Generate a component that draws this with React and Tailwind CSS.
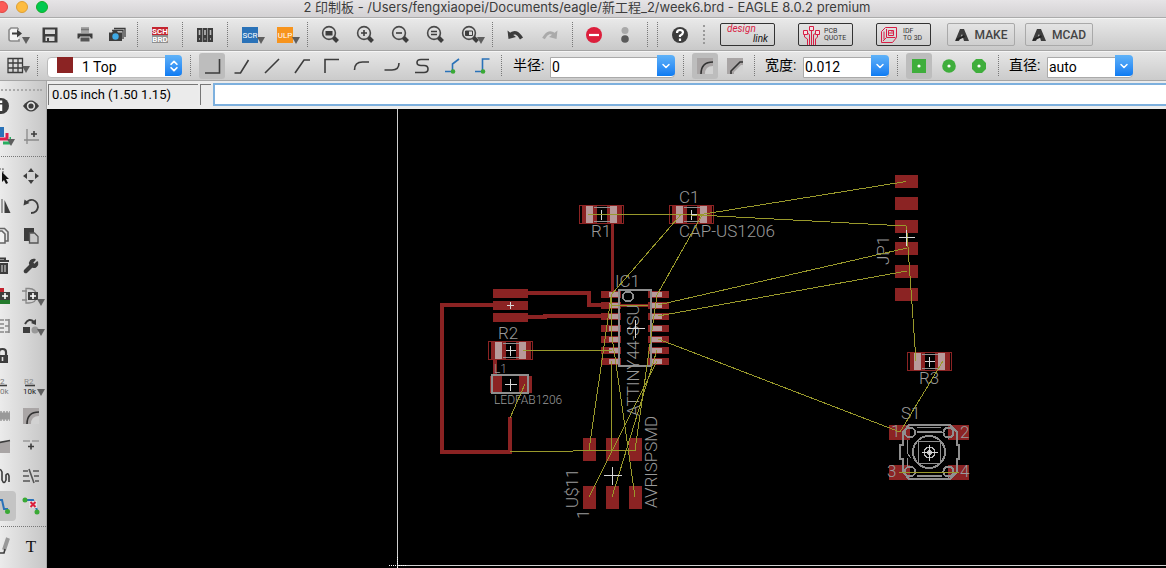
import React, { useState } from "react";
import { ChevronDown, ChevronsUpDown, Wrench } from "lucide-react";

const INK = "#3d3d3d";

// Shared 20x20 icon frame
const Icon = ({ children }) => (
  <svg width="20" height="20" viewBox="0 0 20 20" fill="none" stroke={INK} strokeWidth="1.6" className="shrink-0">
    {children}
  </svg>
);

const Magnifier = ({ children }) => (
  <Icon>
    <circle cx="9" cy="8" r="6.4" stroke="#4a4a4a" />
    <path d="M13.5 12.5l4 4" strokeWidth="4" />
    {children}
  </Icon>
);

const icons = {
  export: (
    <Icon>
      <path d="M12 3H5L3 5v9q0 2 2 2h8v-2M12 3v2" stroke="#8a8a8a" fill="#f4f4f4" />
      <path d="M6 8.500h6" strokeWidth="2" />
      <path d="M11 4.500l5 4-5 4z" fill={INK} stroke="none" />
    </Icon>
  ),
  save: (
    <Icon>
      <path d="M2.500 2.500h15v15h-15z" fill={INK} stroke="none" />
      <path d="M5 4.500h10v4.500H5zM5.500 11.500h9V16h-9z" fill="#d8d8d8" stroke="none" />
      <path d="M7 13h2v3H7z" fill={INK} stroke="none" />
    </Icon>
  ),
  print: (
    <Icon>
      <path d="M6 2h8v6H6z" fill="#a5a5a5" stroke="none" />
      <path d="M6 4.500h8" stroke="#777" />
      <path d="M2.500 8.500h15v5h-15z" fill={INK} stroke="none" />
      <path d="M5 12h10v5H5z" fill="#555" stroke="#d6d6d6" strokeWidth="1" />
    </Icon>
  ),
  camera: (
    <Icon>
      <path d="M7 3.500h11V12M5 5.500h11V14" strokeWidth="1.300" />
      <path d="M2 7.500h3L6 6h4l1 1.500h4V16H2z" fill={INK} stroke="none" />
      <circle cx="8.500" cy="11.500" r="3.200" fill="#3fa9e5" stroke="none" />
    </Icon>
  ),
  schBrd: (
    <Icon>
      <path d="M2 2h16v8H2z" fill="#c4242f" stroke="none" />
      <path d="M2 10h16v8H2z" fill="#8f8f8f" stroke="none" />
      <g fill="#fff" stroke="none" fontFamily="Roboto, sans-serif" fontSize="8" fontWeight="700" textAnchor="middle">
        <text x="10" y="9">SCH</text>
        <text x="10" y="17">BRD</text>
      </g>
    </Icon>
  ),
  library: (
    <Icon>
      <path d="M2 3h5v14H2zM7.500 3h5v14h-5zM13 3h5v14h-5z" fill={INK} stroke="none" />
      <path d="M4.500 5v5M10 5v5M15.500 5v5M4 14h1M9.500 14h1M15 14h1" stroke="#bdbdbd" />
    </Icon>
  ),
  scr: (
    <Icon>
      <path d="M2 2h16v16H2z" fill="#2a72b8" stroke="none" />
      <text x="10" y="13" fill="#fff" stroke="none" fontSize="8" fontFamily="Roboto, sans-serif" textAnchor="middle">SCR</text>
    </Icon>
  ),
  ulp: (
    <Icon>
      <path d="M2 2h16v16H2z" fill="#f7941d" stroke="none" />
      <text x="10" y="13" fill="#fff" stroke="none" fontSize="8" fontFamily="Roboto, sans-serif" textAnchor="middle">ULP</text>
    </Icon>
  ),
  zoomFit: <Magnifier><path d="M5.500 6h7v4.500h-7z" fill={INK} stroke="none" /></Magnifier>,
  zoomIn: <Magnifier><path d="M6 8h6M9 5v6" /></Magnifier>,
  zoomOut: <Magnifier><path d="M6 8h6" /></Magnifier>,
  redraw: <Magnifier><path d="M6 6.500h6M6 9.500h6" /></Magnifier>,
  zoomSelect: (
    <Magnifier>
      <path d="M5.500 6h7v4.500h-7z" strokeWidth="1" />
      <path d="M5.500 6h3.500v4.500H5.500z" fill={INK} stroke="none" />
    </Magnifier>
  ),
  undo: (
    <Icon>
      <path d="M5 10q6-6 11.500 3.500" strokeWidth="3.500" />
      <path d="M2.500 5.500l1 8.500 7.500-2z" fill={INK} stroke="none" />
    </Icon>
  ),
  redo: (
    <Icon>
      <path d="M15 10q-6-6-11.500 3.500" strokeWidth="3" stroke="#aaa" />
      <path d="M17.500 5.500l-1 8.500-7.500-2z" fill="#aaa" stroke="none" />
    </Icon>
  ),
  stop: (
    <Icon>
      <circle cx="9" cy="10" r="8" fill="#dc1f3c" stroke="none" />
      <path d="M4 10h10" stroke="#fff" strokeWidth="2.200" />
    </Icon>
  ),
  go: (
    <Icon>
      <circle cx="8" cy="5.500" r="3.500" fill="#a9a9a9" stroke="none" />
      <circle cx="8" cy="14" r="3.800" fill="#5a5a5a" stroke="none" />
    </Icon>
  ),
  help: (
    <Icon>
      <circle cx="10" cy="10" r="8" fill={INK} stroke="none" />
      <path d="M7 8q0-3 3-3t3 2.600q0 1.400-3 3v1.400M10 13.500V16" stroke="#fff" strokeWidth="2.200" />
    </Icon>
  ),
  grid: (
    <Icon>
      <path d="M2 2.500h14.500v14H2zM7 2.500v14M12 2.500v14M2 7h14.500M2 12h14.500" strokeWidth="1.300" />
    </Icon>
  ),
  layers: (
    <Icon>
      <path d="M0 1h13v10H0z" fill="#2a72b8" stroke="none" />
      <path d="M16 7v6H9" stroke="#dc1f4c" strokeWidth="3" />
      <path d="M20 11v6h-8" stroke="#27ae60" strokeWidth="3" />
    </Icon>
  ),
  mark: <Icon><path d="M6 3v15M3 14h15" stroke="#8a8a8a" strokeWidth="1.300" /><path d="M10 8h6M13 5v6" /></Icon>,
  info: (
    <Icon>
      <circle cx="10" cy="10" r="8" fill={INK} stroke="none" />
      <path d="M10 8.500V15M10 4.500v2.500" stroke="#fff" strokeWidth="2.500" />
    </Icon>
  ),
  eye: (
    <Icon>
      <path d="M2 10q8-11 16 0-8 11-16 0z" fill={INK} stroke="none" />
      <circle cx="10" cy="10" r="3.400" fill={INK} stroke="#e0e0e0" />
    </Icon>
  ),
  pick: (
    <Icon>
      <path d="M2 3h10v7" stroke="#888" strokeDasharray="2 1" />
      <path d="M11 6l7 7h-3l2 4-2 1-2-4-2 2z" fill="#111" stroke="none" />
    </Icon>
  ),
  move: (
    <Icon>
      <path d="M10 2l3 4H7zM10 18l3-4H7zM2 10l4-3v6zM18 10l-4-3v6z" fill={INK} stroke="none" />
    </Icon>
  ),
  mirror: <Icon><path d="M11 3v14" stroke="#888" /><path d="M13.500 4l6 13h-6z" fill={INK} stroke="none" /></Icon>,
  rotate: (
    <Icon>
      <path d="M5 7q3-4 7-3 5 2 5 7-1 6-7 6" strokeWidth="1.800" />
      <path d="M2.500 9.500l1-6 5 3.500z" fill={INK} stroke="none" />
    </Icon>
  ),
  copy: (
    <Icon>
      <path d="M7 5V2.500h6.500L17 6v9h-3" stroke="#666" />
      <path d="M4 5h7l3 3v9H4z" fill="#f2f2f2" stroke="#666" />
    </Icon>
  ),
  paste: (
    <Icon>
      <path d="M3 2h10v13H3z" fill={INK} stroke="none" />
      <path d="M8.500 7h5l3.500 3.500V17H8.500z" fill="#c9c9c9" stroke="#555" strokeWidth="1.300" />
    </Icon>
  ),
  trash: (
    <Icon>
      <path d="M4 5h14M8 4V2.500h6V4" strokeWidth="2" />
      <path d="M5 7h12v11H5z" fill={INK} stroke="none" />
      <path d="M11 9v7M14 9v7" stroke="#bbb" strokeWidth="1.300" />
    </Icon>
  ),
  wrench: <Wrench size={16} fill={INK} color={INK} />,
  add: (
    <Icon>
      <path d="M2 2h11v5H2z" fill="#c4242f" stroke="none" />
      <path d="M2 13h17v5H2z" fill="#237a2c" stroke="none" />
      <path d="M9 6h10v8H9z" fill={INK} stroke="none" />
      <path d="M11 10h6M14 7v6" stroke="#fff" />
    </Icon>
  ),
  replace: (
    <Icon>
      <path d="M1 5h5M1 14h5M5 2.500h3q7 0 8 7.500-1 7-8 7H5z" stroke="#888" strokeWidth="1.300" />
      <path d="M7 6h10v8H7z" fill={INK} stroke="none" />
      <path d="M9 10h6M12 7v6" stroke="#fff" />
    </Icon>
  ),
  pinswap: <Icon><path d="M9 4h4M9 8h4M9 12h4M9 16h4M18 3v14M14 4h4M14 10h4M14 16h4" stroke="#888" /></Icon>,
  gateswap: (
    <Icon>
      <path d="M2 11h7v6H2z" fill={INK} stroke="none" />
      <circle cx="14" cy="14" r="3.500" fill="#999" stroke="none" />
      <path d="M4 8q4-7 9-2" strokeWidth="2" />
      <path d="M15 3v6l-5-2z" fill={INK} stroke="none" />
    </Icon>
  ),
  lock: (
    <Icon>
      <path d="M6 9h11v8H6z" fill={INK} stroke="none" />
      <path d="M8 9V6q0-3 3.500-3T15 6v3" strokeWidth="2.200" />
      <path d="M11.500 11v4" stroke="#ddd" />
    </Icon>
  ),
  name: (
    <Icon>
      <path d="M9 9.500h7" />
      <g fill="#777" stroke="none" fontSize="8" fontFamily="Roboto, sans-serif">
        <text x="9" y="8">2</text><text x="9" y="18">0k</text>
      </g>
    </Icon>
  ),
  value: (
    <Icon>
      <path d="M4 9.500h10" />
      <g stroke="none" fontSize="8" fontFamily="Roboto, sans-serif">
        <text x="3" y="8" fill="#888">R2</text><text x="2" y="18" fill="#222">10k</text>
      </g>
    </Icon>
  ),
  smash: <Icon><path d="M9 6.500h10v7H9z" fill="#999" stroke="none" /><path d="M9 6h10M9 14h10" stroke="#999" strokeDasharray="2 1" /></Icon>,
  miter: (
    <Icon>
      <path d="M2 2h16v16H2z" fill="#a9a5a5" stroke="none" />
      <path d="M10 18q0-8 8-8v8z" fill="#d2d2d2" stroke="none" />
      <path d="M6 18q0-12 12-12" stroke="#333" />
    </Icon>
  ),
  miterLine: (
    <Icon>
      <path d="M2 2h16v16H2z" fill="#a9a5a5" stroke="none" />
      <path d="M9 18v-2l7-7h2v9z" fill="#d2d2d2" stroke="none" />
      <path d="M6 18v-3l9-9h3" stroke="#333" />
    </Icon>
  ),
  split: <Icon><path d="M0 8l19-3v12H0z" fill="#a9a5a5" stroke="none" /><path d="M0 8l19-3.500" /></Icon>,
  optimize: <Icon><path d="M2 5h7M11 5h7" stroke="#999" /><path d="M7 10.500h6M10 7.500v6" /></Icon>,
  meander: <Icon><path d="M7 15V6q2-5 4 0v8q2 5 4 0V9q2-3 3 1v6" /></Icon>,
  align: <Icon><path d="M2 5h5M2 10h6M2 15h7M8 3l5 14M12 5h6M13 10h5M14 15h4" stroke="#555" /></Icon>,
  route: (
    <Icon>
      <path d="M4 4h7l2 9h4" stroke="#2a72b8" strokeWidth="2" />
      <circle cx="16.500" cy="15.500" r="2.500" fill="#3aa935" stroke="none" />
    </Icon>
  ),
  ripup: (
    <Icon>
      <path d="M5 4h7l4 10" stroke="#2a72b8" strokeWidth="2" />
      <circle cx="4" cy="4" r="2.500" fill="#3aa935" stroke="none" />
      <circle cx="16" cy="16" r="2.500" fill="#3aa935" stroke="none" />
      <path d="M8 5h8v7H8z" fill="#e3e3e3" stroke="none" />
      <path d="M9.500 6l5 5M14.500 6l-5 5" stroke="#dc1f3c" strokeWidth="2" />
    </Icon>
  ),
  line: <Icon><path d="M17 2l-4 12" stroke="#999" strokeWidth="4" /><path d="M0 17h13l1-4" /></Icon>,
  text: <Icon><text x="10" y="16" fill="#111" stroke="none" fontSize="17" fontFamily="Liberation Serif, serif" textAnchor="middle">T</text></Icon>,
  bend0: <Icon><path d="M3 17h14.500V3" /></Icon>,
  bend1: <Icon><path d="M2.500 17h6l8-13" /></Icon>,
  bend2: <Icon><path d="M3 17L17 3" /></Icon>,
  bend3: <Icon><path d="M3 17l9-13h6" /></Icon>,
  bend4: <Icon><path d="M3 17V3.500h14" /></Icon>,
  bend5: <Icon><path d="M2.500 14q0-8 8-8H17" /></Icon>,
  bend6: <Icon><path d="M2.500 14H10q7 0 7-7" /></Icon>,
  bend7: <Icon><path d="M17 3.500H9q-4 0-4 3t4 3h3q4 0 4 3.500T12 16.500H3" /></Icon>,
  bend8: <Icon><path d="M3 15.500h7.500V8l6.500-5" stroke="#2a72b8" /><circle cx="11" cy="15.500" r="2.300" fill="#3aa935" stroke="none" /></Icon>,
  bend9: <Icon><path d="M3 15.500h7.500V3h7" stroke="#2a72b8" /><circle cx="11" cy="15.500" r="2.300" fill="#3aa935" stroke="none" /></Icon>,
  viaSquare: <Icon><path d="M3 3h14v14H3z" fill="#3fae3c" stroke="none" /><circle cx="10" cy="10" r="1.600" fill="#fff" stroke="none" /></Icon>,
  viaRound: <Icon><circle cx="10" cy="10" r="6.800" fill="#3fae3c" stroke="none" /><circle cx="10" cy="10" r="1.600" fill="#fff" stroke="none" /></Icon>,
  viaOctagon: <Icon><path d="M7 3h6l4 4v6l-4 4H7l-4-4V7z" fill="#3fae3c" stroke="none" /><circle cx="10" cy="10" r="1.600" fill="#fff" stroke="none" /></Icon>,
};

const MenuArrow = ({ className }) => (
  <svg width="8" height="7" viewBox="0 0 8 7" className={`absolute ${className}`}>
    <path d="M0 0h8L4 7z" fill="#5e5e5e" />
  </svg>
);

const ToolButton = ({ icon, label, menu, className = "w-[35px]" }) => (
  <button type="button" aria-label={label} className={`relative flex h-full shrink-0 items-center justify-center ${className}`}>
    {icons[icon]}
    {menu && <MenuArrow className="right-[2px] bottom-[6px]" />}
  </button>
);

const Separator = ({ className = "w-[10px]" }) => (
  <div className={`flex h-full shrink-0 justify-center py-[3px] ${className}`}>
    <div className="border-l border-dotted border-[#777]"></div>
  </div>
);

const TitleBar = () => (
  <header className="relative flex h-[18px] shrink-0 items-center justify-center border-b border-[#ababab] bg-linear-to-b from-[#e6e4e6] to-[#d3d1d3] pb-[3px] pl-2">
    <svg width="52" height="16" viewBox="0 0 52 16" className="absolute top-0 left-0">
      <circle cx="2" cy="7" r="5.500" fill="#fc5b57" stroke="#df4744" />
      <circle cx="22" cy="7" r="5.500" fill="#fdbc40" stroke="#de9f34" />
      <circle cx="42" cy="7" r="5.500" fill="#00c94f" stroke="#12ac28" />
    </svg>
    <h1 className="font-[Inter,'Noto_Sans_CJK_SC',sans-serif] text-[13px] leading-4 whitespace-nowrap text-[#3c3c3c]">
      2 印制板 - /Users/fengxiaopei/Documents/eagle/新工程_2/week6.brd - EAGLE 8.0.2 premium
    </h1>
  </header>
);

const AutodeskMark = () => (
  <svg width="14" height="14" viewBox="0 0 14 14">
    <path d="M0 13L5 1h4l5 12h-5L7 6 4 13z" fill={INK} />
    <path d="M1 11l8-4 1 2-9 4z" fill="#222" />
  </svg>
);

const MainToolbar = () => (
  <div className="flex h-[33px] shrink-0 items-center border-t border-b border-t-[#f5f5f5] border-b-[#a5a5a5] bg-linear-to-b from-[#e9e9e9] to-[#c9c9c9]">
    <ToolButton icon="export" label="Open" menu className="w-8" />
    <ToolButton icon="save" label="Save" />
    <ToolButton icon="print" label="Print" />
    <ToolButton icon="camera" label="CAM" className="w-[30px]" />
    <Separator />
    <ToolButton icon="schBrd" label="Switch to schematic" />
    <Separator />
    <ToolButton icon="library" label="Library" />
    <Separator />
    <ToolButton icon="scr" label="Run script" menu />
    <ToolButton icon="ulp" label="Run ULP" menu />
    <Separator />
    <ToolButton icon="zoomFit" label="Zoom to fit" />
    <ToolButton icon="zoomIn" label="Zoom in" />
    <ToolButton icon="zoomOut" label="Zoom out" />
    <ToolButton icon="redraw" label="Redraw" />
    <ToolButton icon="zoomSelect" label="Zoom select" menu />
    <Separator />
    <ToolButton icon="undo" label="Undo" />
    <ToolButton icon="redo" label="Redo" />
    <Separator />
    <ToolButton icon="stop" label="Stop" />
    <ToolButton icon="go" label="Go" className="w-[30px]" />
    <Separator />
    <Separator />
    <ToolButton icon="help" label="Help" />
    <div className="flex h-full w-[14px] shrink-0 justify-center py-[6px]">
      <div className="border-l-2 border-dotted border-[#999]"></div>
    </div>

    <div className="ml-[9px] flex shrink-0 items-center gap-[23px]">
      <button type="button" className="flex h-[23px] w-[55px] flex-col rounded-[2px] border border-[#333] px-1.5 text-[10px] leading-[10px] italic">
        <span className="self-start text-[#d81e45]">design</span>
        <span className="self-end text-[#111]">link</span>
      </button>
      <button type="button" className="flex h-[23px] w-[55px] items-center gap-1 rounded-[2px] border border-[#333] pl-[3px] text-left text-[7px] leading-[7px] text-[#333]">
        <svg width="18" height="20" viewBox="0 0 18 20" fill="none" stroke="#d81e45" className="shrink-0">
          <path d="M9.500 5v15M7.500 20V9.500L6 8.500M11.500 20V9.500l2-1M5.500 20v-6l-3-2V9M13.500 20v-6l2-2V9" />
          <path d="M7.500 1.500h4v4h-4zM1.500 5.500h4v4h-4zM13.500 5.500h4v4h-4z" fill="#f6dfe4" />
        </svg>
        <span>PCB<br />QUOTE</span>
      </button>
      <button type="button" className="flex h-[23px] w-[55px] items-center gap-1.5 rounded-[2px] border border-[#333] pl-1 text-left text-[7px] leading-[7px] text-[#333]">
        <svg width="16" height="16" viewBox="0 0 16 16" fill="none" stroke="#d81e45" className="shrink-0">
          <path d="M4.500.5h11v10l-4 5H.5v-11zM5.500 2v8.500h9M5 11l-3 3M3 4.500v8M7.500 3.500h5v5h-5zM8 6h2M11 4v3" />
        </svg>
        <span>IDF<br />TO 3D</span>
      </button>
    </div>
    <div className="ml-[16px] flex shrink-0 items-center gap-[10px]">
      {["MAKE", "MCAD"].map((name) => (
        <button
          key={name}
          type="button"
          className="flex h-[23px] w-[68px] items-center justify-center gap-1.5 rounded-[2px] border border-[#a9a9a9] text-[12px] font-medium text-[#444]"
        >
          <AutodeskMark />
          {name}
        </button>
      ))}
    </div>
  </div>
);

const Combo = ({ id, options, className }) => {
  const [value, setValue] = useState(options[0]);

  return (
    <div className={`relative h-[21px] shrink-0 ${className}`}>
      <select
        id={id}
        value={value}
        onChange={(e) => setValue(e.target.value)}
        className="h-full w-full appearance-none rounded-r-[4px] border border-[#aaa] bg-white pl-px text-[14px] leading-4 text-black outline-none"
      >
        {options.map((option) => (
          <option key={option}>{option}</option>
        ))}
      </select>
      <span className="pointer-events-none absolute inset-y-0 right-0 flex w-[18px] items-center justify-center rounded-r-[4px] bg-linear-to-b from-[#5fb2f8] to-[#0a7bf2]">
        <ChevronDown size={12} strokeWidth={3} color="#fff" />
      </span>
    </div>
  );
};

const BendButton = ({ icon, active, label, onClick }) => (
  <button
    type="button"
    aria-label={label}
    aria-pressed={active}
    onClick={onClick}
    className={`flex h-[26px] w-[26px] shrink-0 items-center justify-center rounded-[3px] ${active ? "bg-[#bdbdbd]" : ""}`}
  >
    {icons[icon]}
  </button>
);

const ButtonGroup = ({ names, label }) => {
  const [active, setActive] = useState(names[0]);
  return (
    <div className="flex shrink-0 gap-1">
      {names.map((name, i) => (
        <BendButton key={name} icon={name} label={`${label} ${i + 1}`} active={name === active} onClick={() => setActive(name)} />
      ))}
    </div>
  );
};

const bends = ["bend0", "bend1", "bend2", "bend3", "bend4", "bend5", "bend6", "bend7", "bend8", "bend9"];

const ParameterToolbar = () => (
  <div className="flex h-[30px] shrink-0 items-center border-t border-b border-t-[#f5f5f5] border-b-[#a5a5a5] bg-linear-to-b from-[#e6e6e6] to-[#cbcbcb] pb-px">
    <ToolButton icon="grid" label="Grid" menu className="w-8" />
    <Separator />
    <div className="relative ml-[5px] h-[21px] w-[135px] shrink-0">
      <select
        aria-label="Layer"
        defaultValue="1 Top"
        className="h-full w-full appearance-none rounded-[4px] border border-[#bbb] bg-white pl-[34px] text-[14px] leading-4 text-black outline-none"
      >
        <option>1 Top</option>
        <option>16 Bottom</option>
      </select>
      <span className="pointer-events-none absolute top-[2px] left-[10px] h-4 w-4 bg-[#8b2323]"></span>
      <span className="pointer-events-none absolute inset-y-0 right-0 flex w-[17px] items-center justify-center rounded-r-[4px] bg-linear-to-b from-[#5fb2f8] to-[#0a7bf2]">
        <ChevronsUpDown size={14} strokeWidth={3} color="#fff" />
      </span>
    </div>
    <Separator className="w-[17px]" />
    <ButtonGroup names={bends} label="Wire bend" />
    <Separator className="w-[12px]" />
    <label htmlFor="radius" className="ml-1.5 w-[37px] shrink-0 text-[14px]">半径:</label>
    <Combo id="radius" options={["0", "0.01", "0.05"]} className="w-[125px]" />
    <Separator className="w-[17px]" />
    <ButtonGroup names={["miter", "miterLine"]} label="Miter" />
    <Separator className="w-[13px]" />
    <label htmlFor="width" className="ml-1 w-[38px] shrink-0 text-[14px]">宽度:</label>
    <Combo id="width" options={["0.012", "0.016", "0.024"]} className="w-[86px]" />
    <Separator className="w-[17px]" />
    <ButtonGroup names={["viaSquare", "viaRound", "viaOctagon"]} label="Via shape" />
    <Separator className="w-[13px]" />
    <label htmlFor="diameter" className="ml-1 w-[38px] shrink-0 text-[14px]">直径:</label>
    <Combo id="diameter" options={["auto", "0.02", "0.04"]} className="w-[86px]" />
  </div>
);

const toolGroups = [
  [["info"], ["eye"], ["layers", true], ["mark"]],
  [
    ["pick"], ["move"],
    ["mirror"], ["rotate"],
    ["copy"], ["paste"],
    ["trash"], ["wrench"],
    ["add"], ["replace", true],
    ["pinswap"], ["gateswap", true],
    ["lock"], null,
    ["name"], ["value", true],
    ["smash"], ["miter"],
    ["split"], ["optimize"],
    ["meander"], ["align"],
    ["route"], ["ripup"],
  ],
  [["line"], ["text"]],
];

const Sidebar = () => (
  <aside className="flex w-[47px] shrink-0 justify-end overflow-hidden border-r border-[#a9a9a9] bg-linear-to-r from-[#ebebeb] to-[#c6c6c6]">
    <div className="w-[60px] shrink-0">
      <div className="flex h-[10px] items-end">
        <div className="w-[56px] border-t-2 border-dotted border-[#aaa]"></div>
      </div>
      {toolGroups.map((group, g) => (
        <div key={g}>
          {g > 0 && (
            <div className="flex h-[10px] items-center">
              <div className="w-full border-t border-dotted border-[#777]"></div>
            </div>
          )}
          <div className="grid grid-cols-2">
            {group.map((tool, i) =>
              tool ? (
                <button
                  key={tool[0]}
                  type="button"
                  aria-label={tool[0]}
                  className={`relative flex h-[30px] items-center justify-center ${tool[0] === "route" ? "rounded-[4px] bg-[#c4c4c4]" : ""}`}
                >
                  {icons[tool[0]]}
                  {tool[1] && <MenuArrow className="right-px bottom-[5px]" />}
                </button>
              ) : (
                <span key={i}></span>
              )
            )}
          </div>
        </div>
      ))}
    </div>
  </aside>
);

const CommandRow = () => (
  <div className="flex h-[28px] shrink-0 gap-[2px] bg-[#ececec] pt-[2px] pb-[3px] pl-px">
    <output className="my-px flex w-[150px] shrink-0 items-center border-t border-l border-[#777] bg-[#ebebeb] pl-[3px] text-[13px] whitespace-nowrap text-black">
      0.05 inch (1.50 1.15)
    </output>
    <div className="my-px w-[11px] shrink-0 border-t border-l border-[#777]"></div>
    <input aria-label="Command" className="min-w-0 flex-1 border-2 border-r-0 border-[#7db0de] bg-white px-1 text-[14px] outline-none" />
  </div>
);

const RED = "#8b2323";
const PINK = "#b89a9a";
const GRAY = "#8f8f8f";
const WIRE = "#99992b";

const Cross = ({ x, y, r }) => <path d={`M${x - r} ${y}h${r * 2}M${x} ${y - r}v${r * 2}`} stroke="#d8d8d8" />;

// 1206 package, drawn around its origin
const Chip = ({ x, y }) => (
  <g transform={`translate(${x} ${y})`}>
    <path d="M-22-9h44V9h-44z" stroke={RED} />
    <path d="M-20-8.500h15v17h-15zM5-8.500h15v17H5z" fill={RED} />
    <path d="M-15.500-8.500h7v17h-7zM8-8.500h7v17H8z" fill={PINK} />
    <path d="M-8-7H8M-8 7H8" stroke={GRAY} />
    <Cross x={0} y={0} r={5} />
  </g>
);

const icRows = [294, 305, 316, 328, 339, 350, 361];
const headerRows = [175, 197, 220, 242, 265, 288];
const ispColumns = [583, 606, 629];

const airwires = [
  "M588 214.500H691", "M681 214.500L611 295", "M702 215L657 295L635 450", "M691 216L704 214L906 181.500", "M698 215L906 226",
  "M658 305L907 248", "M658 316L907 271", "M658 339L900 432", "M906.500 226L916 361",
  "M943 361L900 432", "M899 472.500H959", "M523 350.500H612", "M611.500 294L589 450",
  "M611.500 294V333L635 497", "M611.500 361V450", "M611 305.500H648", "M657 350L612 497",
  "M657 361L589 497", "M525 384L510 418", "M510 451.500H552L594 450.500H635V450",
];

const Board = () => (
  <svg width="1119" height="459" viewBox="47 109 1119 459" fill="none" shapeRendering="crispEdges" className="shrink-0">
    <path d="M397.500 109V568M397 565.500H1166" stroke="#d0d0d0" />
    <path d="M389 565.500h17M397.500 557v11" stroke="#fff" strokeDasharray="1 1" />

    {/* Routed copper */}
    <g stroke={RED} strokeWidth="4">
      <path d="M528 293H589V305H610M528 317H545V316H610M493 305H442V452H510V417M495 359V376" />
      <path d="M612.500 222V292M620 305H648" strokeWidth="3" />
    </g>

    {/* Pads */}
    <g fill={RED}>
      <path d="M493 289h35v9h-35zM493 301h35v9h-35zM493 313h35v9h-35z" />
      <path d="M490 376h12v17h-12zM519 376h13v17h-13z" />
      {headerRows.map((y) => <rect key={y} x="895" y={y} width="23" height="13" />)}
      {ispColumns.map((x) => <path key={x} d={`M${x} 438h13v23h-13zM${x} 486h13v23h-13z`} />)}
      {icRows.map((y) => <path key={y} d={`M601 ${y - 3}h20v7h-20zM648 ${y - 3}h21v7h-21z`} />)}
      <path d="M889 425h21v15h-21zM948 425h21v15h-21zM889 465h21v15h-21zM948 465h21v15h-21z" />
    </g>
    {icRows.map((y) => <path key={y} d={`M609 ${y - 2}h11v5h-11zM652 ${y - 2}h10v5h-10z`} fill={PINK} />)}
    <Chip x={601.5} y={214.5} />
    <Chip x={691.5} y={214.5} />
    <Chip x={510.5} y={350.5} />
    <Chip x={929.5} y={361.5} />

    {/* Package outlines */}
    <g stroke={GRAY} strokeWidth="2">
      <path d="M619 290h32v76h-32zM492 375h36v18h-36z" />
      <circle cx="628" cy="296.500" r="5" />
      <path d="M909 425h41l7 7v13h2v14h-2v13l-7 7h-41l-6-7v-13h-3v-14h3v-13zM917 432h25M917 476h25" />
      <circle cx="929" cy="452" r="16" />
      <circle cx="910" cy="432.500" r="5" />
      <circle cx="948.500" cy="432.500" r="5" />
      <circle cx="910" cy="471.500" r="5" />
      <circle cx="948.500" cy="471.500" r="5" />
      <path d="M918.500 441.500h22v22h-22zM917 427.500h24M907.500 440v13l3 5M907.500 458v8" strokeWidth="1" />
    </g>
    <circle cx="929.500" cy="452.500" r="2.500" fill="#bbb" />
    <circle cx="929.500" cy="452.500" r="5.500" stroke="#bbb" />

    <g fill="#9a9a9a" fontFamily="Roboto, sans-serif" fontSize="17" fontWeight="300">
      <text x="591" y="237">R1</text>
      <text x="679" y="203">C1</text>
      <text x="679" y="237">CAP-US1206</text>
      <text x="615" y="287">IC1</text>
      <text x="498" y="339">R2</text>
      <text x="919" y="384">R3</text>
      <text x="901" y="419">S1</text>
      <text x="891" y="437">1</text>
      <text x="960" y="438">2</text>
      <text x="887" y="477">3</text>
      <text x="960" y="477">4</text>
      <text x="494" y="373" fontSize="12">L1</text>
      <text x="494" y="404" fontSize="12">LEDFAB1206</text>
      <text transform="translate(639 416) rotate(-90)">ATTINY44-SSU</text>
      <text transform="translate(657 508) rotate(-90)">AVRISPSMD</text>
      <text transform="translate(578 508) rotate(-90)">U$11</text>
      <text transform="translate(589 519) rotate(-90)">1</text>
      <text transform="translate(889 265) rotate(-90)">JP1</text>
    </g>

    <g stroke={WIRE}>
      {airwires.map((d) => <path key={d} d={d} />)}
    </g>

    <Cross x={510.5} y={305.5} r={3.5} />
    <Cross x={510.5} y={384.5} r={6} />
    <Cross x={635.5} y={328.5} r={9} />
    <Cross x={612.5} y={475.5} r={9} />
    <Cross x={906.5} y={237.5} r={8} />
    <Cross x={929.5} y={452.5} r={8} />
  </svg>
);

export default function App() {
  return (
    <div className="flex h-screen flex-col overflow-hidden bg-[#ececec] font-[Roboto,'Noto_Sans_CJK_SC',sans-serif]">
      <TitleBar />
      <MainToolbar />
      <ParameterToolbar />
      <div className="flex min-h-0 flex-1">
        <Sidebar />
        <div className="flex min-w-0 flex-1 flex-col">
          <CommandRow />
          <main className="flex min-h-0 flex-1 items-start overflow-hidden bg-black">
            <Board />
          </main>
        </div>
      </div>
    </div>
  );
}
